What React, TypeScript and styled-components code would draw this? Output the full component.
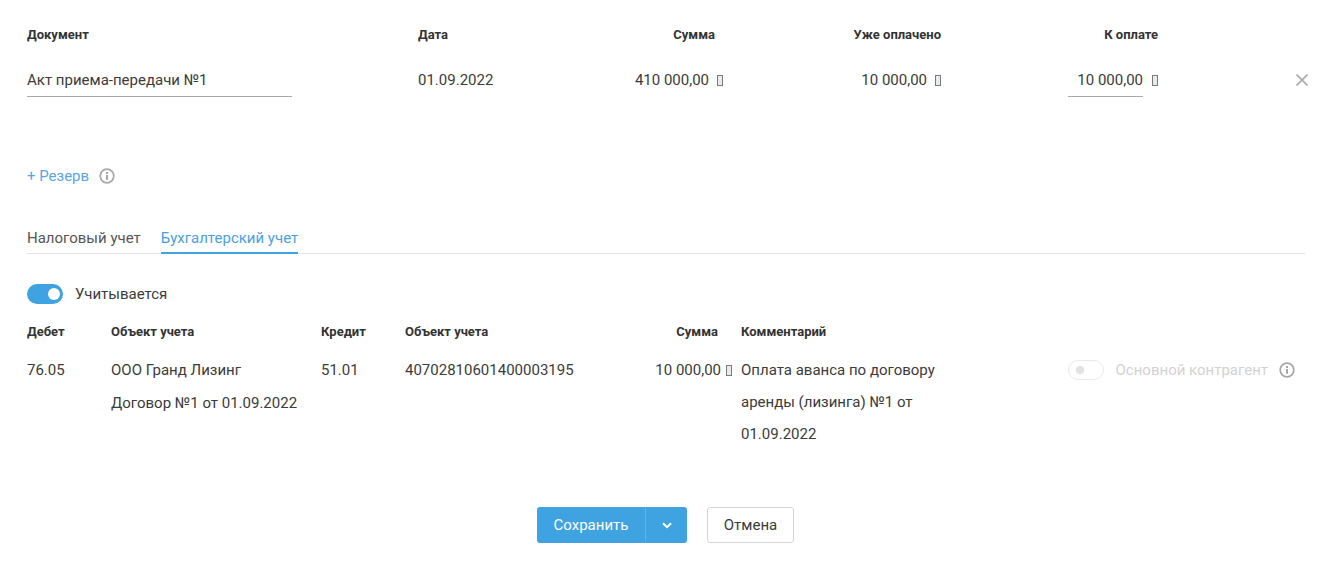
import React from "react";
import styled, { createGlobalStyle } from "styled-components";

const GlobalStyle = createGlobalStyle`
    html, body {
        margin: 0;
        padding: 0;
        background: #fff;
        color: #3b3b3b;
        font-family: Roboto, "Liberation Sans", sans-serif;
        font-size: 15px;
    }
`;

const Page = styled.div`
    width: 1334px;
    height: 571px;
    box-sizing: border-box;
    padding: 27px 29px 0 27px;
    overflow: hidden;
`;

const DocGrid = styled.div`
    display: grid;
    grid-template-columns: 391px 200px 97px 226px 217px 1fr;
`;

const HeadCell = styled.div<{ $right?: boolean }>`
    font-size: 13px;
    font-weight: 700;
    line-height: 15px;
    color: #333;
    text-align: ${props => props.$right ? "right" : "left"};
`;

const ValueCell = styled.div<{ $shift?: number }>`
    margin-top: 20px;
    height: 41px;
    display: flex;
    align-items: flex-start;
    justify-content: flex-end;
    line-height: 36px;
    white-space: nowrap;
    margin-right: ${props => props.$shift ? -props.$shift : 0}px;
`;

const PlainValue = styled(ValueCell)`
    justify-content: flex-start;
`;

const UnderlinedField = styled.div<{ $width: number }>`
    width: ${props => props.$width}px;
    height: 34px;
    box-sizing: content-box;
    border-bottom: 1px solid #aaa;
    text-align: ${props => props.$width < 100 ? "right" : "left"};
`;

const Ruble = styled.span<{ $gap: number; $top?: number }>`
    display: inline-block;
    box-sizing: border-box;
    width: 6px;
    height: 11px;
    margin-left: ${props => props.$gap}px;
    align-self: flex-start;
    margin-top: ${props => props.$top ?? 13}px;
    border: 1px solid #7a7a7a;
    background: #e6ebf1;
    flex: none;
`;

const CloseCell = styled(ValueCell)`
    justify-content: flex-end;
    padding-right: 2px;
    margin-right: -5px;
`;

const CloseButton = styled.svg`
    width: 12px;
    height: 12px;
    margin-top: 12px;
    stroke: #aaa;
    stroke-width: 1.6;
    fill: none;
`;

const ReserveRow = styled.div`
    margin-top: 63px;
    display: flex;
    align-items: center;
    gap: 10px;
    height: 20px;
`;

const ReserveLink = styled.a`
    color: #5ba4e0;
    line-height: 20px;
`;

const InfoIcon = () => (
    <svg width="16" height="16" viewBox="0 0 16 16" fill="none">
        <circle cx="8" cy="8" r="6.8" stroke="#a6a6a6" strokeWidth="1.7" />
        <rect x="7" y="7" width="2" height="4.8" fill="#a6a6a6" />
        <rect x="7" y="4" width="2" height="2" fill="#a6a6a6" />
    </svg>
);

const Tabs = styled.div`
    margin-top: 31px;
    display: flex;
    gap: 20px;
    border-bottom: 1px solid #e5e5e5;
    height: 36px;
    box-sizing: content-box;
`;

const Tab = styled.div<{ $active?: boolean }>`
    box-sizing: border-box;
    line-height: 42px;
    color: ${props => props.$active ? "#4a9fe0" : "#555"};
    border-bottom: ${props => props.$active ? "2px solid #3ea3e0" : "none"};
    height: 37px;
`;

const ToggleRow = styled.div`
    margin-top: 30px;
    display: flex;
    align-items: center;
    gap: 12px;
    height: 20px;
    line-height: 20px;
`;

const Toggle = styled.div<{ $on?: boolean }>`
    width: 36px;
    height: 20px;
    box-sizing: border-box;
    border-radius: 10px;
    position: relative;
    flex: none;
    background: ${props => props.$on ? "#3ea3e0" : "#fff"};
    border: ${props => props.$on ? "none" : "1px solid #eaeaea"};
    &::after {
        content: "";
        position: absolute;
        top: ${props => props.$on ? 4 : 5}px;
        left: ${props => props.$on ? 21 : 7}px;
        width: ${props => props.$on ? 12 : 8}px;
        height: ${props => props.$on ? 12 : 8}px;
        border-radius: 50%;
        background: ${props => props.$on ? "#fff" : "#e2e2e2"};
    }
`;

const EntryGrid = styled.div`
    margin-top: 20px;
    display: grid;
    grid-template-columns: 84px 210px 84px 200px 113px 1fr;
`;

const EntryCell = styled.div`
    margin-top: 15px;
    line-height: 33px;
`;

const SumCell = styled(EntryCell)`
    display: flex;
    justify-content: flex-end;
    white-space: nowrap;
    margin-right: -14px;
`;

const CommentHead = styled(HeadCell)`
    padding-left: 23px;
`;

const CommentRow = styled(EntryCell)`
    padding-left: 23px;
    display: flex;
    justify-content: space-between;
    line-height: 32px;
`;

const CommentText = styled.div`
    width: 210px;
`;

const MainContact = styled.div`
    display: flex;
    align-items: center;
    gap: 12px;
    height: 20px;
    margin-top: 6px;
    padding-right: 10px;
    line-height: 20px;
`;

const MainContactLabel = styled.span`
    color: #d2d2d2;
    margin-right: -1px;
`;

const Actions = styled.div`
    margin-top: 57px;
    display: flex;
    justify-content: center;
    gap: 20px;
    padding-right: 1px;
`;

const SplitButton = styled.div`
    display: flex;
    height: 36px;
    border-radius: 3px;
    overflow: hidden;
    background: #3ea3e0;
    color: #fff;
`;

const SaveButton = styled.div`
    width: 108px;
    text-align: center;
    line-height: 36px;
    border-right: 1px solid #5cb3e8;
    box-sizing: content-box;
`;

const ArrowButton = styled.div`
    width: 41px;
    display: flex;
    align-items: center;
    justify-content: center;
`;

const CancelButton = styled.div`
    width: 87px;
    height: 36px;
    box-sizing: border-box;
    border: 1px solid #d5d5d5;
    border-radius: 3px;
    text-align: center;
    line-height: 34px;
`;

function App() {
    return (
        <Page>
            <GlobalStyle />
            <DocGrid>
                <HeadCell>Документ</HeadCell>
                <HeadCell>Дата</HeadCell>
                <HeadCell $right>Сумма</HeadCell>
                <HeadCell $right>Уже оплачено</HeadCell>
                <HeadCell $right>К оплате</HeadCell>
                <div />
                <PlainValue><UnderlinedField $width={265}>Акт приема-передачи №1</UnderlinedField></PlainValue>
                <PlainValue>01.09.2022</PlainValue>
                <ValueCell $shift={8}>410 000,00<Ruble $gap={8} /></ValueCell>
                <ValueCell>10 000,00<Ruble $gap={8} /></ValueCell>
                <ValueCell><UnderlinedField $width={75}>10 000,00</UnderlinedField><Ruble $gap={9} /></ValueCell>
                <CloseCell>
                    <CloseButton viewBox="0 0 12 12"><path d="M0.5 0.5L11.5 11.5M11.5 0.5L0.5 11.5" /></CloseButton>
                </CloseCell>
            </DocGrid>
            <ReserveRow>
                <ReserveLink>+ Резерв</ReserveLink>
                <InfoIcon />
            </ReserveRow>
            <Tabs>
                <Tab>Налоговый учет</Tab>
                <Tab $active>Бухгалтерский учет</Tab>
            </Tabs>
            <ToggleRow>
                <Toggle $on />
                Учитывается
            </ToggleRow>
            <EntryGrid>
                <HeadCell>Дебет</HeadCell>
                <HeadCell>Объект учета</HeadCell>
                <HeadCell>Кредит</HeadCell>
                <HeadCell>Объект учета</HeadCell>
                <HeadCell $right>Сумма</HeadCell>
                <CommentHead>Комментарий</CommentHead>
                <EntryCell>76.05</EntryCell>
                <EntryCell>ООО Гранд Лизинг<br />Договор №1 от 01.09.2022</EntryCell>
                <EntryCell>51.01</EntryCell>
                <EntryCell>40702810601400003195</EntryCell>
                <SumCell>10 000,00<Ruble $gap={5} $top={11} /></SumCell>
                <CommentRow>
                    <CommentText>Оплата аванса по договору аренды (лизинга) №1 от 01.09.2022</CommentText>
                    <MainContact>
                        <Toggle />
                        <MainContactLabel>Основной контрагент</MainContactLabel>
                        <InfoIcon />
                    </MainContact>
                </CommentRow>
            </EntryGrid>
            <Actions>
                <SplitButton>
                    <SaveButton>Сохранить</SaveButton>
                    <ArrowButton>
                        <svg width="10" height="7" viewBox="0 0 10 7" fill="none">
                            <path d="M1 1.2L5 5.2L9 1.2" stroke="#fff" strokeWidth="2" />
                        </svg>
                    </ArrowButton>
                </SplitButton>
                <CancelButton>Отмена</CancelButton>
            </Actions>
        </Page>
    );
}

export default App;
